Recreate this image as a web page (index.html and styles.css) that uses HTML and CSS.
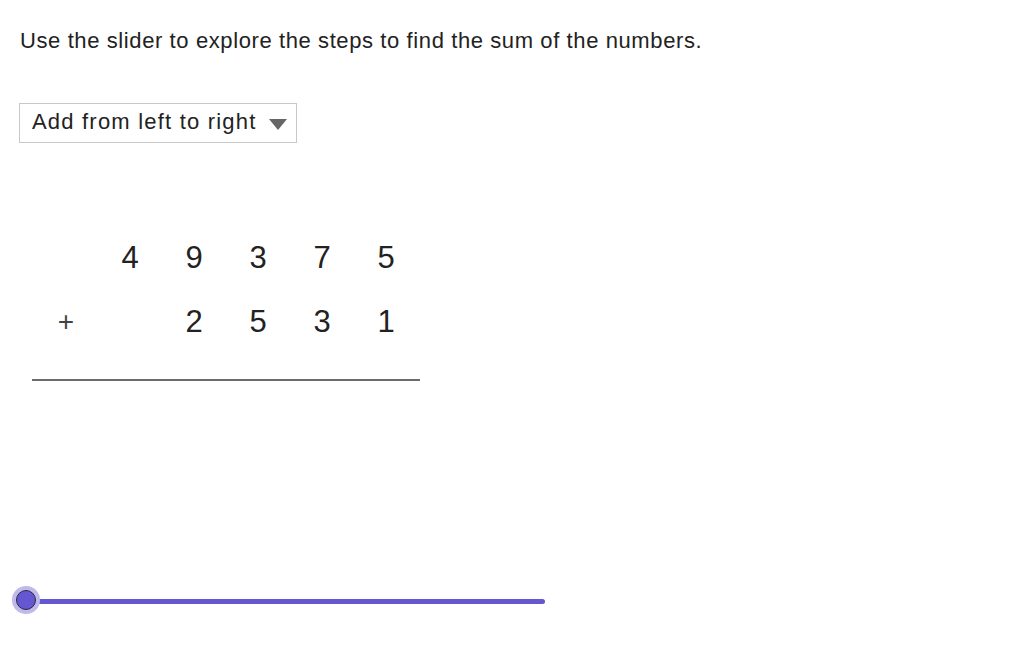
FILE: index.html
```html
<!DOCTYPE html>
<html>
<head>
<meta charset="utf-8">
<link rel="stylesheet" href="styles.css">
</head>
<body>
<div class="applet">
  <p class="prompt">Use the slider to explore the steps to find the sum of the numbers.</p>
  <div class="dropdown">
    <span class="dd-label">Add from left to right</span>
    <svg class="dd-arrow" width="18" height="11" viewBox="0 0 18 11"><polygon points="0,0 18,0 9,11" fill="#666"/></svg>
  </div>
  <div class="sum">
    <span></span><span>4</span><span>9</span><span>3</span><span>7</span><span>5</span>
    <span class="plus">+</span><span></span><span>2</span><span>5</span><span>3</span><span>1</span>
  </div>
  <div class="rule"></div>
  <div class="slider">
    <div class="track"></div>
    <div class="knob"></div>
  </div>
</div>
</body>
</html>
```

FILE: styles.css
```css
html, body {
  margin: 0;
  padding: 0;
  background: #fff;
}
.applet {
  width: 1032px;
  height: 645px;
  font-family: "Liberation Sans", Arial, sans-serif;
  color: #222;
  display: flex;
  flex-direction: column;
  align-items: flex-start;
}
.prompt {
  margin: 27px 0 0 20px;
  font-size: 22px;
  letter-spacing: 0.6px;
  line-height: 28px;
  height: 28px;
}
.dropdown {
  margin: 48px 0 0 19px;
  box-sizing: border-box;
  width: 278px;
  height: 40px;
  border: 1px solid #c8c8c8;
  display: flex;
  align-items: center;
  padding-left: 12px;
  padding-right: 9px;
}
.dd-label {
  font-size: 22px;
  letter-spacing: 1.2px;
  line-height: 24px;
  margin-bottom: 3px;
  color: #222;
}
.dd-arrow {
  margin-left: auto;
  margin-top: 3px;
}
.sum {
  margin: 83px 0 0 34px;
  display: grid;
  grid-template-columns: repeat(6, 64px);
  grid-auto-rows: 64px;
  font-size: 31px;
  color: #222;
}
.sum span {
  display: flex;
  align-items: center;
  justify-content: center;
}
.plus {
  font-weight: 300;
  color: #444;
  font-size: 28px;
}
.rule {
  margin: 25px 0 0 32px;
  width: 388px;
  height: 2px;
  background: #6b6b6b;
}
.slider {
  position: relative;
  margin: 210px 0 0 26px;
  width: 520px;
  height: 20px;
  display: flex;
  align-items: center;
}
.track {
  width: 519px;
  height: 5px;
  border-radius: 3px;
  background: #6557d2;
}
.knob {
  position: absolute;
  left: -10px;
  top: -1px;
  width: 18px;
  height: 18px;
  border-radius: 50%;
  background: #6557d2;
  border: 1.5px solid #2a2a3a;
  box-shadow: 0 0 0 4px #c0b9ec;
}
```
